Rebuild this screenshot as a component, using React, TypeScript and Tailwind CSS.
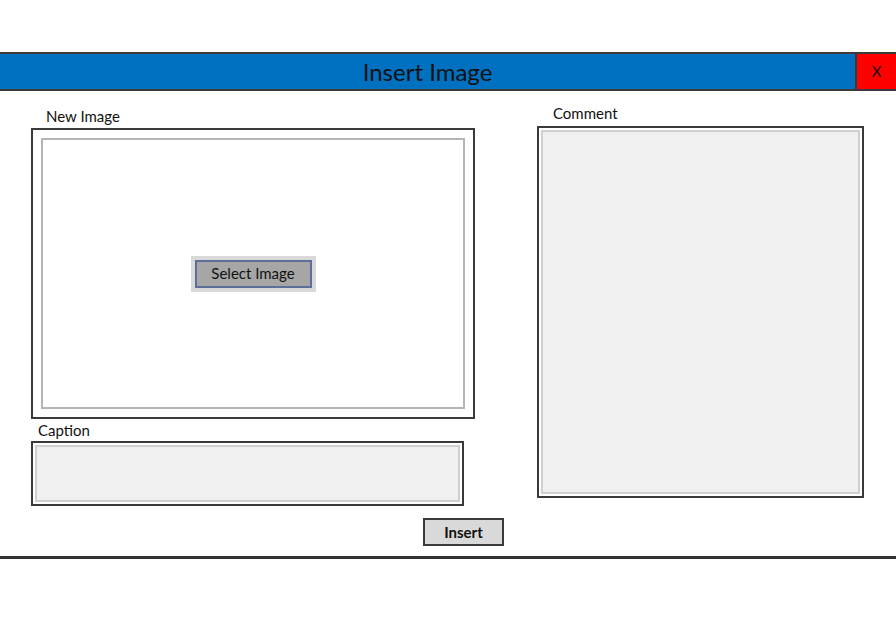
export default function App() {
  return (
    <div className="w-[896px] h-[619px] bg-white pt-[52px] font-['Lato',sans-serif] text-[#111]">
      {/* title bar */}
      <div className="flex h-[39px] border-y-2 border-[#3a3a3a] bg-[#0070c0]">
        <div className="flex-1 flex items-center justify-center text-[24px] leading-none">
          Insert Image
        </div>
        <div className="w-[41px] flex items-center justify-center border-l-2 border-[#3a3a3a] bg-[#ff0000] text-[15px]">
          X
        </div>
      </div>

      <div className="flex pl-[31px] gap-[62px]">
        {/* left column */}
        <div className="w-[444px] pt-[16px]">
          <div className="h-[18px] leading-[18px] pl-[15px] text-[15px]">New Image</div>
          <div className="mt-[3px] h-[291px] border-2 border-[#3a3a3a] p-[8px]">
            <div className="h-full border-2 border-[#b4b4b4] flex items-center justify-center">
              <div className="bg-[#d9d9d9] p-[4px]">
                <button className="w-[117px] h-[28px] bg-[#a6a6a6] border-2 border-[#5b6f98] text-[15px] leading-none text-[#111]">
                  Select Image
                </button>
              </div>
            </div>
          </div>
          <div className="mt-[2px] h-[18px] leading-[18px] pl-[7px] text-[15px]">Caption</div>
          <div className="mt-[2px] w-[433px] h-[65px] border-2 border-[#3a3a3a] p-[2px]">
            <div className="h-full border-2 border-[#d0d0d0] bg-[#f0f0f0]" />
          </div>
        </div>

        {/* right column */}
        <div className="w-[327px] pt-[13px]">
          <div className="h-[18px] leading-[18px] pl-[16px] text-[15px]">Comment</div>
          <div className="mt-[4px] h-[372px] border-2 border-[#3a3a3a] p-[2px]">
            <div className="h-full border-2 border-[#d0d0d0] bg-[#f0f0f0]" />
          </div>
        </div>
      </div>

      <div className="mt-[12px] pl-[423px]">
        <button className="w-[81px] h-[28px] bg-[#d9d9d9] border-2 border-[#3a3a3a] text-[15px] font-bold leading-none text-[#111]">
          Insert
        </button>
      </div>

      <div className="mt-[10px] h-[3px] bg-[#333]" />
    </div>
  );
}
